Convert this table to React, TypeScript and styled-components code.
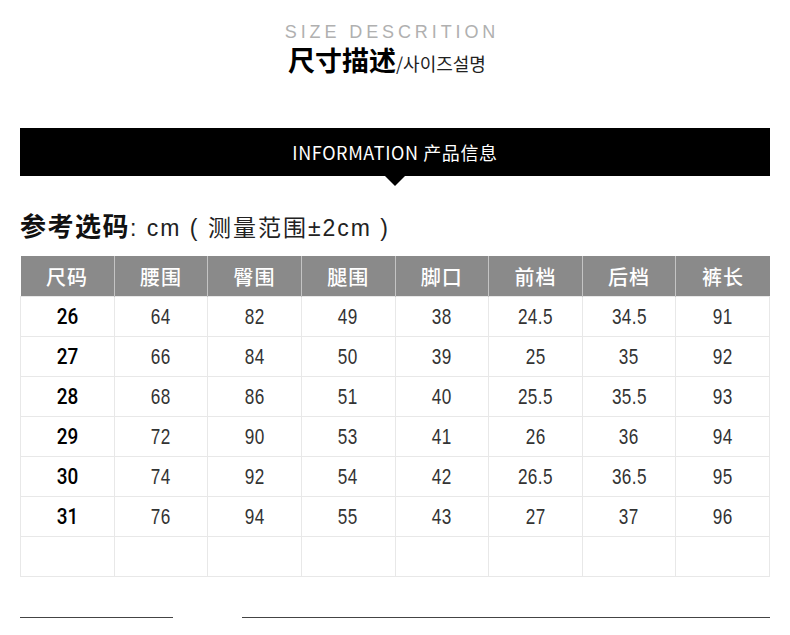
import React from "react";
import styled, { createGlobalStyle } from "styled-components";

const Global = createGlobalStyle`
  html, body { margin: 0; padding: 0; background: #fff; }
  body { font-family: "Liberation Sans", "Noto Sans CJK SC", sans-serif; }
`;

const Page = styled.div`
  width: 750px;
  margin: 0 auto;
  padding-top: 23px;
  display: flex;
  flex-direction: column;
`;

const TitleBlock = styled.div`
  display: flex;
  flex-direction: column;
  align-items: center;
`;

const EnTitle = styled.div`
  font-family: "Liberation Sans", sans-serif;
  font-size: 18px;
  line-height: 18px;
  height: 18px;
  letter-spacing: 3.9px;
  color: #b0b0b0;
  padding-right: 6px;
`;

const CnTitle = styled.div`
  display: flex;
  align-items: baseline;
  height: 36px;
  color: #000;
  padding-right: 16px;
`;

const CnMain = styled.span`
  display: inline-block;
  font-family: "Noto Sans CJK SC", sans-serif;
  font-weight: 700;
  font-size: 27px;
  line-height: 38px;
`;

const CnSub = styled.span`
  display: inline-block;
  font-family: "Noto Sans CJK KR", sans-serif;
  font-size: 18px;
  line-height: 38px;
  color: #222;
`;

const BarWrap = styled.div`
  margin-top: 51px;
  display: flex;
  flex-direction: column;
  align-items: center;
`;

const Bar = styled.div`
  width: 100%;
  height: 48px;
  background: #000;
  color: #fff;
  display: flex;
  align-items: center;
  justify-content: center;
  font-family: "Noto Sans CJK SC", sans-serif;
  font-size: 18px;
  letter-spacing: 0.6px;
`;

const Arrow = styled.div`
  width: 0;
  height: 0;
  border-left: 10px solid transparent;
  border-right: 10px solid transparent;
  border-top: 10px solid #000;
`;

const RefLine = styled.div`
  margin-top: 22px;
  height: 34px;
  display: flex;
  align-items: baseline;
  color: #111;
`;

const RefBold = styled.span`
  font-family: "Noto Sans CJK SC", sans-serif;
  font-weight: 700;
  font-size: 26px;
  line-height: 34px;
  letter-spacing: 1.5px;
`;

const RefNormal = styled.span`
  font-family: "Liberation Sans", "Noto Sans CJK SC", sans-serif;
  font-size: 23px;
  line-height: 34px;
  letter-spacing: 2px;
  color: #222;
  white-space: pre;
`;

const Table = styled.table`
  margin-top: 14px;
  width: 750px;
  border-collapse: collapse;
  table-layout: fixed;
`;

const Th = styled.th`
  height: 40px;
  padding: 0;
  background: #8a8a8a;
  color: #fff;
  font-family: "Noto Sans CJK SC", sans-serif;
  font-weight: 500;
  font-size: 20px;
  letter-spacing: 1px;
  border-left: 1px solid #c4c4c4;
  &:first-child { border-left: none; }
`;

const Td = styled.td`
  height: 39px;
  padding: 0;
  text-align: center;
  border: 1px solid #e8e8e8;
`;

const Num = styled.span<{ $bold?: boolean }>`
  display: inline-block;
  font-family: ${(p) => (p.$bold ? `"Roboto", "Liberation Sans", sans-serif` : `"Liberation Sans", sans-serif`)};
  font-weight: ${(p) => (p.$bold ? 500 : 400)};
  font-size: 22px;
  letter-spacing: ${(p) => (p.$bold ? "0" : "0.5px")};
  color: ${(p) => (p.$bold ? "#000" : "#333")};
  transform: scaleX(${(p) => (p.$bold ? 0.86 : 0.78)});
`;

const Footer = styled.div`
  margin-top: 40px;
  display: flex;
  gap: 69px;
`;

const Rule = styled.div<{ $w?: number }>`
  height: 1px;
  background: #444;
  ${(p) => (p.$w ? `width: ${p.$w}px;` : "flex: 1;")}
`;

const headers = ["尺码", "腰围", "臀围", "腿围", "脚口", "前档", "后档", "裤长"];
const rows: string[][] = [
  ["26", "64", "82", "49", "38", "24.5", "34.5", "91"],
  ["27", "66", "84", "50", "39", "25", "35", "92"],
  ["28", "68", "86", "51", "40", "25.5", "35.5", "93"],
  ["29", "72", "90", "53", "41", "26", "36", "94"],
  ["30", "74", "92", "54", "42", "26.5", "36.5", "95"],
  ["31", "76", "94", "55", "43", "27", "37", "96"],
  ["", "", "", "", "", "", "", ""],
];

export default function App() {
  return (
    <>
      <Global />
      <Page>
        <TitleBlock>
          <EnTitle>SIZE DESCRITION</EnTitle>
          <CnTitle>
            <CnMain>尺寸描述</CnMain>
            <CnSub>/사이즈설명</CnSub>
          </CnTitle>
        </TitleBlock>
        <BarWrap>
          <Bar>INFORMATION 产品信息</Bar>
          <Arrow />
        </BarWrap>
        <RefLine>
          <RefBold>参考选码</RefBold>
          <RefNormal>{": cm ( 测量范围±2cm )"}</RefNormal>
        </RefLine>
        <Table>
          <thead>
            <tr>
              {headers.map((h) => (
                <Th key={h}>{h}</Th>
              ))}
            </tr>
          </thead>
          <tbody>
            {rows.map((r, i) => (
              <tr key={i}>
                {r.map((c, j) => (
                  <Td key={j}>
                    {c && <Num $bold={j === 0}>{c}</Num>}
                  </Td>
                ))}
              </tr>
            ))}
          </tbody>
        </Table>
        <Footer>
          <Rule $w={153} />
          <Rule />
        </Footer>
      </Page>
    </>
  );
}
